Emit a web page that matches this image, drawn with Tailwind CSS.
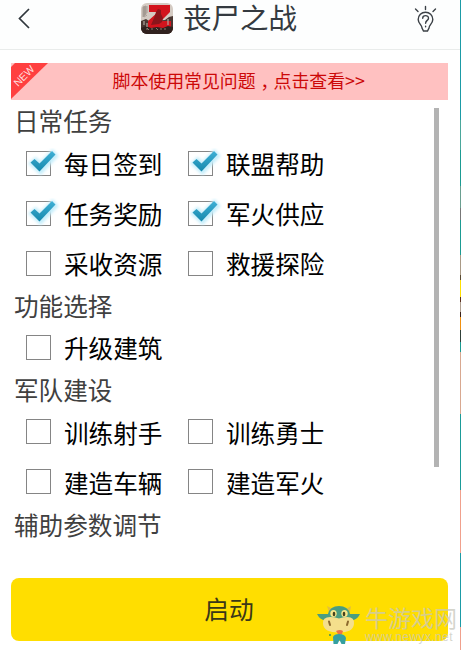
<!DOCTYPE html>
<html lang="zh-CN">
<head>
<meta charset="utf-8">
<title>丧尸之战</title>
<script src="https://cdn.jsdelivr.net/npm/@tailwindcss/browser@4"></script>
</head>
<body class="relative h-[650px] w-[461px] overflow-hidden bg-white font-['Noto_Sans_CJK_SC',sans-serif]">
<svg width="0" height="0" class="absolute">
  <defs>
    <linearGradient id="tick" x1="0" y1="0" x2="0" y2="1"><stop offset="0" stop-color="#3fb0d6"/><stop offset="1" stop-color="#1688ac"/></linearGradient>
    <filter id="glow" x="-40%" y="-40%" width="180%" height="180%"><feGaussianBlur stdDeviation="1.6"/></filter>
    <symbol id="check" viewBox="0 0 34 34">
      <path d="M5 15.500L9.500 11.500L14.500 16L26.500 4L30 8L14.500 24.500Z" fill="#c6eefb" stroke="#c6eefb" stroke-width="4" filter="url(#glow)"/>
      <path d="M4.500 14.500L8.500 11L13.500 15.500L26 3L29.500 6.500L13.500 23.500Z" fill="url(#tick)"/>
    </symbol>
  </defs>
</svg>
<div class="flex h-full w-[460px] flex-col">
  <header class="flex h-[50px] shrink-0 items-start border-b border-[#e9eceb] bg-[#fdfefe]">
    <svg class="ml-[17px] mt-[7px] shrink-0" width="14" height="23" viewBox="0 0 14 23" fill="none" stroke="#30363c" stroke-width="1.700"><path d="M12 2L2.500 11.500L12 21"/></svg>
    <svg class="ml-[110px] mt-[3px] shrink-0" width="32" height="31" viewBox="0 0 32 31">
      <clipPath id="app"><rect width="32" height="31" rx="6"/></clipPath>
      <g clip-path="url(#app)">
        <path fill="#d4cbc3" d="M0 0h32v31H0z"/>
        <path d="M2 4l3-1v8l-3 3zM6 3v7M3 14l3-2" fill="#a39a92" stroke="#a79d95"/>
        <path d="M0 18l5-2 3 2 16-1 4-3 4-1v18H0z" fill="#4a3732"/>
        <path d="M8 2H29V9L20 18H30V25H7V18L17 9H8Z" fill="#d3141d"/>
        <path d="M15 9l2-3 3 1 0 4 2 4-1 4-3 2-8 1 3-7z" fill="#8b151b"/>
        <path d="M0 25l5-2 5 2 6-1 6 1 5-2 5 1v8H0z" fill="#30211e"/>
        <path d="M3 18v4M6 20v4M27 16v6" stroke="#b3a79f" stroke-width="1.200"/>
        <path d="M6 27v-2l2 2M11 25v2M15 25l2 2M20 25v2M24 25v2" stroke="#8f7a70" stroke-width="1" fill="none"/>
      </g>
    </svg>
    <h1 class="ml-[10px] w-[120px] whitespace-nowrap text-[28.500px] leading-[33px] text-[#343a40]">丧尸之战</h1>
    <svg class="ml-[110px] mt-[5px] shrink-0" width="24" height="28" viewBox="0 0 24 28" fill="none" stroke="#3b4046" stroke-width="1.400" stroke-linecap="round">
      <path d="M9 23C9 20 5.200 18.500 5.200 14.500A7.300 7.300 0 0 1 19.800 14.500C19.800 18.500 16 20 16 23L14.500 26H10.500Z"/>
      <path d="M9.700 13.200C9.700 9.800 15.500 9.800 15.500 13.200C15.500 15.600 12.600 15.200 12.600 18.300M12.600 21.200V21.800"/>
      <path d="M12.500 1.500V4.500M2.500 4L5 6.500M22.500 4L20 6.500"/>
    </svg>
  </header>
  <a class="relative ml-[10.500px] mt-[13px] flex h-[37px] w-[437px] shrink-0 items-center bg-[#ffc1c1] pb-[2px] pl-[102px] text-[17.900px] leading-none text-[#cc0808]">
    <svg class="absolute left-0 top-0" width="38" height="37" viewBox="0 0 38 37"><path d="M4 0H37L0 36V4Z" fill="#ff4040"/><text transform="translate(7 24) rotate(-45)" font-family="Liberation Sans" font-size="10.500" fill="#ffdede">NEW</text></svg>
    <span class="whitespace-nowrap">脚本使用常见问题<span lang="zh-TW" class="relative top-[6px] font-['Noto_Sans_CJK_TC',sans-serif]">，</span>点击查看&gt;&gt;</span>
  </a>
  <main class="relative h-[458px] shrink-0 pl-[14px] pt-[4px] text-[24.600px] leading-none text-black">
    <div class="absolute left-[433.500px] top-[8px] h-[359px] w-[5.500px] bg-[#b3b3b3]"></div>
    <h2 class="flex h-[34.300px] items-center pb-px text-[#404040]">日常任务</h2>
    <div class="grid grid-cols-[162px_200px] auto-rows-[50px] pl-[12px]">
      <label class="flex items-center"><span class="relative mr-[13px] size-[25px] border border-[#858585]"><svg class="absolute -left-px -top-[4px]" width="34" height="34"><use href="#check"/></svg></span><span class="pb-px">每日签到</span></label>
      <label class="flex items-center"><span class="relative mr-[13px] size-[25px] border border-[#858585]"><svg class="absolute -left-px -top-[4px]" width="34" height="34"><use href="#check"/></svg></span><span class="pb-px">联盟帮助</span></label>
      <label class="flex items-center"><span class="relative mr-[13px] size-[25px] border border-[#858585]"><svg class="absolute -left-px -top-[4px]" width="34" height="34"><use href="#check"/></svg></span><span class="pb-px">任务奖励</span></label>
      <label class="flex items-center"><span class="relative mr-[13px] size-[25px] border border-[#858585]"><svg class="absolute -left-px -top-[4px]" width="34" height="34"><use href="#check"/></svg></span><span class="pb-px">军火供应</span></label>
      <label class="flex items-center"><span class="mr-[13px] size-[25px] border border-[#858585]"></span><span class="pb-px">采收资源</span></label>
      <label class="flex items-center"><span class="mr-[13px] size-[25px] border border-[#858585]"></span><span class="pb-px">救援探险</span></label>
    </div>
    <h2 class="flex h-[34.300px] items-center pb-px text-[#404040]">功能选择</h2>
    <div class="grid auto-rows-[50px] pl-[12px]">
      <label class="flex items-center"><span class="mr-[13px] size-[25px] border border-[#858585]"></span><span class="pb-px">升级建筑</span></label>
    </div>
    <h2 class="flex h-[34.300px] items-center text-[#404040]">军队建设</h2>
    <div class="grid grid-cols-[162px_200px] auto-rows-[50px] pl-[12px]">
      <label class="flex items-center"><span class="mr-[13px] size-[25px] border border-[#858585]"></span><span>训练射手</span></label>
      <label class="flex items-center"><span class="mr-[13px] size-[25px] border border-[#858585]"></span><span>训练勇士</span></label>
      <label class="flex items-center"><span class="mr-[13px] size-[25px] border border-[#858585]"></span><span>建造车辆</span></label>
      <label class="flex items-center"><span class="mr-[13px] size-[25px] border border-[#858585]"></span><span>建造军火</span></label>
    </div>
    <h2 class="flex h-[34.300px] items-center text-[#404040]">辅助参数调节</h2>
  </main>
  <button class="ml-[10.500px] mt-[20px] h-[63px] w-[437px] shrink-0 rounded-[8px] bg-[#ffde00] pb-[2px] text-[24.700px] leading-none text-[#3a3718]">启动</button>
</div>
<div class="absolute right-0 top-0 h-full w-px bg-[linear-gradient(to_bottom,#1b9ba6_0_120px,#4aa79b_120px_150px,#1b9b92_150px_186px,#6a9f90_186px_208px,#777_208px_220px,#1b9b92_220px_255px,#a99a86_255px_275px,#5a4a30_275px_280px,#ffe000_280px_297px,#5a3020_297px_302px,#b0a090_302px_312px,#3a2018_312px_317px,#f09010_317px_330px,#304038_330px_342px,#1b9b92_342px_352px,#d8a890_352px_414px,#1b9b98_414px_490px,#f0a08c_490px_553px,#1b9ba6_553px_627px,#f0a08c_627px)]"></div>
<div class="absolute left-[316px] top-[604px] flex">
  <svg width="46" height="42" viewBox="0 0 46 42">
    <path d="M17 33Q18 30 23 30Q29 30 30 34L29 40H25.500L23.500 36L21.500 40H17.500Z" fill="#36a0a0"/>
    <path d="M11 2L17 5L13 8ZM35 2L30 5L34 8Z" fill="#e2bf3c"/>
    <path d="M1 10L12 10Q14 2 23 2Q32 2 34 10L44 10Q41 16 36 16L34 24H10L9 16Q4 16 1 10Z" fill="#4a9d80"/>
    <ellipse cx="17.500" cy="9.500" rx="3.200" ry="3.500" fill="#f8e88b"/><ellipse cx="28.500" cy="9.500" rx="3.200" ry="3.500" fill="#f8e88b"/>
    <ellipse cx="18" cy="10" rx="1.300" ry="2.300" fill="#45421e"/><ellipse cx="28" cy="10" rx="1.300" ry="2.300" fill="#45421e"/>
    <path d="M23 14.500Q39 10 38 20Q37 28.500 23 28.500Q8 28.500 7 20Q6 10 23 14.500Z" fill="#f4df8c"/>
    <path d="M13 17.500l1 3.500M32 17.500l-1 3.500" stroke="#8b682d" stroke-width="2" stroke-linecap="round"/>
    <path d="M20 27q4-2 7 0l-1 3h-4z" fill="#ef7245"/><circle cx="14" cy="31" r="1" fill="#36915a"/>
  </svg>
  <div class="ml-[3px] mt-[1px] w-[94px] whitespace-nowrap text-[#c8c8bc]/75">
    <div class="text-[23px] leading-[25px]">牛游戏网</div>
    <div class="mt-px font-['Liberation_Sans',sans-serif] text-[12px] leading-[12px] tracking-[0.400px]">www.newyx.net</div>
  </div>
</div>
</body>
</html>
